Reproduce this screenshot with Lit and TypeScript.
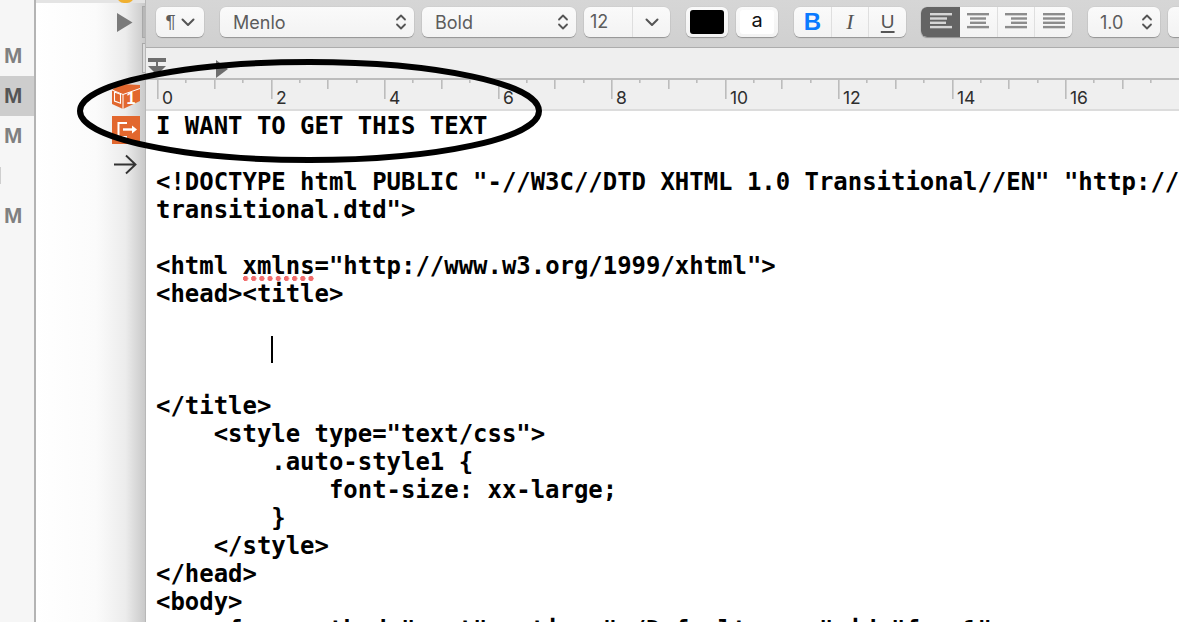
import { LitElement, html, css, svg } from "lit";
import { customElement } from "lit/decorators.js";

const updown = html`<svg class="ud" width="12" height="18" viewBox="0 0 12 18"><path d="M2 6.5 6 2.5l4 4M2 11.5l4 4 4-4" fill="none" stroke="#555" stroke-width="1.8" stroke-linecap="round" stroke-linejoin="round"/></svg>`;
const chev = html`<svg width="14" height="9" viewBox="0 0 14 9"><path d="M1.5 1.5 7 7l5.5-5.5" fill="none" stroke="#555" stroke-width="2" stroke-linecap="round" stroke-linejoin="round"/></svg>`;

function alignIcon(widths: [number, number][], color: string) {
  return html`<svg width="24" height="20" viewBox="0 0 24 20">
    ${widths.map(([x, w], i) => svg`<rect x=${x} y=${1 + i * 4.3} width=${w} height="2.4" fill=${color} />`)}
  </svg>`;
}

function rulerTicks() {
  const out = [];
  const unit = 113.5 / 4;
  for (let i = 0; i < 38; i++) {
    const x = 11 + i * unit;
    const len = i % 4 === 0 ? 20 : i % 2 === 0 ? 10 : 4;
    out.push(svg`<rect x=${Math.round(x)} y="31" width="1.6" height=${len} fill="#bcbcbc" />`);
    if (i % 4 === 0 && x < 1000) {
      out.push(svg`<text x=${Math.round(x) + 5} y="56" class="num">${i / 2}</text>`);
    }
  }
  return out;
}

const codeLines = [
  "I WANT TO GET THIS TEXT",
  "",
  '<!DOCTYPE html PUBLIC "-//W3C//DTD XHTML 1.0 Transitional//EN" "http://www.w3.org/TR/xhtml1/DTD/xhtml1-',
  'transitional.dtd">',
  "",
  "XMLNS",
  "<head><title>",
  "",
  "CARET",
  "",
  "</title>",
  '    <style type="text/css">',
  "        .auto-style1 {",
  "            font-size: xx-large;",
  "        }",
  "    </style>",
  "</head>",
  "<body>",
  '    <form method="post" action="./Default.aspx" id="form1">',
];

@customElement("app-root")
export class AppRoot extends LitElement {
  static styles = css`
    :host { display: block; width: 1179px; height: 622px; overflow: hidden; position: relative; background: #fff; font-family: Inter, "Liberation Sans", sans-serif; }
    .page { display: flex; height: 622px; }
    .side { width: 34px; flex: none; background: #f6f6f6; border-right: 2px solid #b4b4b4; padding-top: 36px; box-sizing: content-box; position: relative; }
    .m { height: 40px; display: flex; align-items: center; padding-left: 4px; font: 700 22px "Liberation Sans", sans-serif; color: #808080; }
    .m.on { background: #cdcdcd; color: #555; }
    .m.gap { color: transparent; }
    .nick { position: absolute; left: 0; top: 167px; width: 1px; height: 17px; background: #cfcfcf; }
    .gutter { width: 109px; flex: none; background: linear-gradient(90deg, #fff 0, #fbfbfb 55%, #ececec 82%, #c9c9c9 100%); display: flex; flex-direction: column; align-items: flex-start; position: relative; }
    .topstrip { height: 3px; align-self: stretch; background: #e4e4e4; position: relative; }
    .coin { position: absolute; left: 81px; top: -4px; width: 17px; height: 7px; border-radius: 0 0 9px 9px; background: #f0b030; }
    .play { margin: 10px 0 0 81px; }
    .icons { margin: 52px 0 0 76px; display: flex; flex-direction: column; gap: 6px; }
    .arrow { margin: 10px 0 0 77px; }
    .h1, .h2 { position: absolute; background: #dcdcdc; border: 1px solid #a8a8a8; border-right: none; box-sizing: border-box; }
    .h1 { right: 0; top: 6px; width: 3px; height: 32px; background: #b8b8b8; }
    .h2 { right: 0; top: 43px; width: 3px; height: 30px; }
    .main { flex: 1; min-width: 0; display: flex; flex-direction: column; border-left: 1px solid #b8b8b8; }
    .toolbar { height: 48px; flex: none; box-sizing: border-box; background: linear-gradient(#d6d6d6, #d0d0d0); border-bottom: 1px solid #adadad; display: flex; align-items: flex-start; padding: 7px 0 0 10px; color: #5c5c5c; font-size: 18px; white-space: nowrap; }
    .btn { height: 30px; box-sizing: border-box; background: linear-gradient(#fafafa, #f3f3f3); border-radius: 6px; box-shadow: 0 1px 1px rgba(0, 0, 0, .28), 0 0 0 .5px rgba(0, 0, 0, .06); display: flex; align-items: center; flex: none; }
    .para { width: 48px; margin-right: 16px; justify-content: center; gap: 5px; font: 19px "Liberation Sans", sans-serif; }
    .font { width: 194px; margin-right: 8px; padding: 0 7px 0 13px; justify-content: space-between; }
    .style { width: 154px; margin-right: 8px; padding: 0 7px 0 13px; justify-content: space-between; }
    .size { width: 86px; margin-right: 16px; }
    .size b { font-weight: 400; width: 49px; padding-left: 6px; box-sizing: border-box; height: 30px; line-height: 30px; border-right: 1px solid #dedede; }
    .size i { flex: 1; display: flex; justify-content: center; }
    .well { width: 42px; margin-right: 8px; padding: 3px 4px; align-items: stretch; }
    .well span { flex: 1; border-radius: 3px; background: #000; }
    .well.a { margin-right: 16px; }
    .well.a span { background: #fff; color: #111; text-align: center; font: 20px/21px Inter, sans-serif; }
    .seg { display: flex; overflow: hidden; padding: 0; }
    .seg > div { height: 30px; display: flex; align-items: center; justify-content: center; border-right: 1px solid #dfdfdf; box-sizing: border-box; }
    .seg > div:last-child { border-right: none; }
    .biu { width: 112px; margin-right: 15px; }
    .biu > div { flex: 1; font: 22px "Liberation Sans", sans-serif; color: #555; }
    .biu .b { color: #0a7aff; font-weight: 700; font-size: 24px; }
    .biu .i { font-style: italic; font-family: "Liberation Serif", serif; }
    .biu .u { text-decoration: underline; text-underline-offset: 3px; text-decoration-thickness: 1.5px; font-size: 19px; }
    .al { width: 151px; margin-right: 16px; }
    .al > div { flex: 1; }
    .al .sel { width: 39px; flex: none; background: #646464; border-right: none; }
    .ls { width: 72px; margin-right: 8px; padding: 0 7px 0 12px; justify-content: space-between; }
    .last { width: 40px; }
    .ruler { height: 61px; flex: none; background: #efefef; border-bottom: 2px solid #dcdcdc; box-sizing: content-box; }
    .ruler svg { display: block; }
    .num { font: 17.5px Inter, "Liberation Sans", sans-serif; fill: #2e2e2e; }
    .code { flex: 1; overflow: hidden; padding: 1px 0 0 10px; background: #fff; font: 700 23.95px/28px "DejaVu Sans Mono", monospace; color: #000; }
    .line { height: 28px; white-space: pre; }
    .sp { position: relative; }
    .sp::after { content: ""; position: absolute; left: 1px; right: 1px; bottom: -1px; height: 5px; background: radial-gradient(circle at 2.5px 2.5px, #f26d6d 2.4px, transparent 2.8px) 0 0 / 8.2px 5px repeat-x; }
    .caret { display: inline-block; width: 1.5px; height: 27px; background: #000; vertical-align: top; }
    .oval { position: absolute; left: 0; top: 0; pointer-events: none; }
  `;

  render() {
    return html`
      <div class="page">
        <div class="side">
          <div class="m">M</div>
          <div class="m on">M</div>
          <div class="m">M</div>
          <div class="m gap">M</div>
          <div class="m">M</div>
          <div class="nick"></div>
        </div>
        <div class="gutter">
          <div class="topstrip"><div class="coin"></div></div>
          <svg class="play" width="16" height="19" viewBox="0 0 16 19"><path d="M0 0v19l15.5-9.5z" fill="#7a7a7a"/></svg>
          <div class="icons">
            <svg width="28" height="26" viewBox="0 0 28 26">
              <path d="M0 6 8 0l20 1v16l-17 8-11-5z" fill="#e2672e"/>
              <path d="M0 6l11 4.500 17-6M11 10.500V25" fill="none" stroke="#fff" stroke-width="1"/>
              <path d="M2.500 8l6 2.300v9l-6-2.300z" fill="none" stroke="#fff" stroke-width="1.100"/>
              <text x="14.500" y="20" font-family="Liberation Sans, sans-serif" font-weight="700" font-size="16" fill="#fff">1</text>
            </svg>
            <svg width="28" height="28" viewBox="0 0 28 28">
              <rect width="28" height="28" fill="#e2672e"/>
              <path d="M15 7H6.500v14H15" fill="none" stroke="#fff" stroke-width="2"/>
              <path d="M11 13.500h11" stroke="#fff" stroke-width="2.400"/>
              <path d="M20 9.500l5 4-5 4z" fill="#fff"/>
            </svg>
          </div>
          <svg class="arrow" width="24" height="21" viewBox="0 0 24 21"><path d="M1 10.500h21M13 1.500l9.500 9-9.500 9" fill="none" stroke="#333" stroke-width="1.900"/></svg>
          <div class="h1"></div>
          <div class="h2"></div>
        </div>
        <div class="main">
          <div class="toolbar">
            <div class="btn para"><span>¶</span>${chev}</div>
            <div class="btn font"><span>Menlo</span>${updown}</div>
            <div class="btn style"><span>Bold</span>${updown}</div>
            <div class="btn size"><b>12</b><i>${chev}</i></div>
            <div class="btn well"><span></span></div>
            <div class="btn well a"><span>a</span></div>
            <div class="btn seg biu"><div class="b">B</div><div class="i">I</div><div class="u">U</div></div>
            <div class="btn seg al">
              <div class="sel">${alignIcon([[1, 22], [1, 17], [1, 16], [1, 22]], "#d6d6d6")}</div>
              <div>${alignIcon([[1, 22], [4, 16], [4, 16], [1, 22]], "#8c8c8c")}</div>
              <div>${alignIcon([[1, 22], [7, 16], [7, 16], [1, 22]], "#8c8c8c")}</div>
              <div>${alignIcon([[1, 22], [1, 22], [1, 22], [1, 22]], "#8c8c8c")}</div>
            </div>
            <div class="btn ls"><span>1.0</span>${updown}</div>
            <div class="btn last"></div>
          </div>
          <div class="ruler">
            <svg width="1033" height="61" viewBox="0 0 1033 61">
              <rect x="2" y="10" width="18" height="4" fill="#6e6e6e"/>
              <path d="M2 18h18l-9 9z" fill="#6e6e6e"/>
              <rect x="10" y="13" width="2" height="6" fill="#6e6e6e"/>
              <path d="M70 12v18l12-9z" fill="#6e6e6e"/>
              <rect x="0" y="30" width="1033" height="2" fill="#bcbcbc"/>
              ${rulerTicks()}
            </svg>
          </div>
          <div class="code">${codeLines.map((l) => {
            if (l === "XMLNS") return html`<div class="line">&lt;html <span class="sp">xmlns</span>="http://www.w3.org/1999/xhtml"&gt;</div>`;
            if (l === "CARET") return html`<div class="line">        <span class="caret"></span></div>`;
            return html`<div class="line">${l}</div>`;
          })}</div>
        </div>
      </div>
      <svg class="oval" width="1179" height="622" viewBox="0 0 1179 622">
        <ellipse cx="309.500" cy="111" rx="229.500" ry="49" fill="none" stroke="#000" stroke-width="6"/>
      </svg>
    `;
  }
}
